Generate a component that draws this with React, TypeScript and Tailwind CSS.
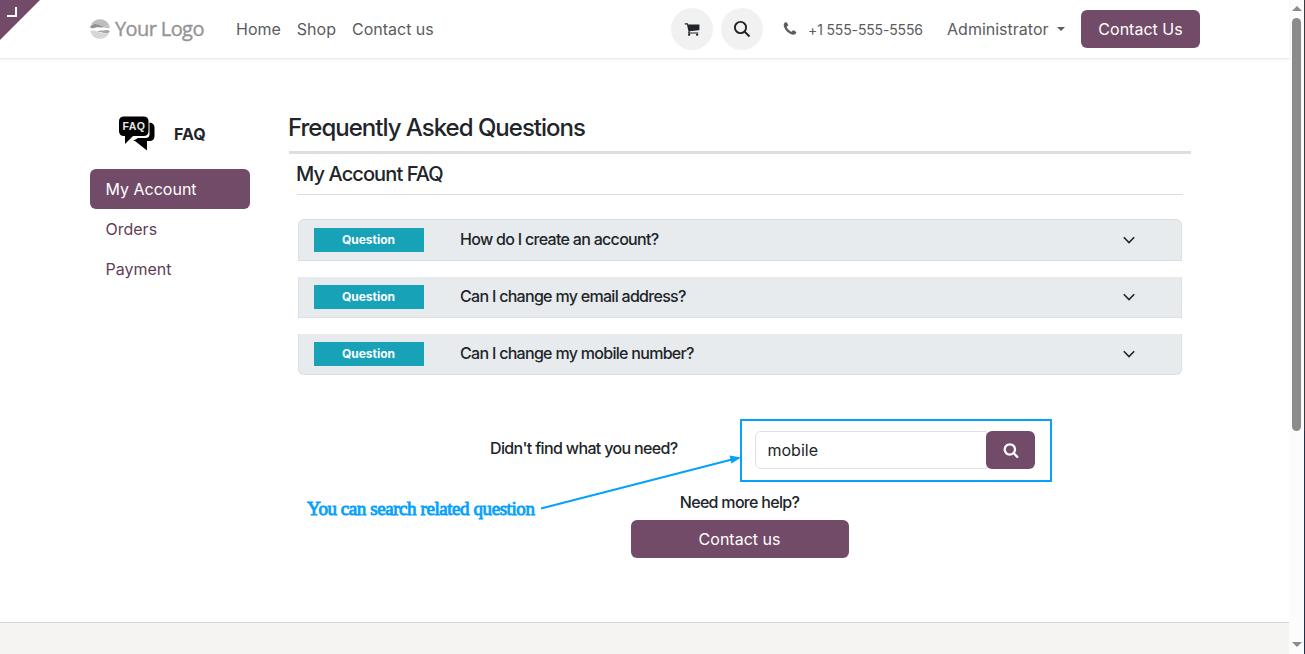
import { useState } from 'react';
import clsx from 'clsx';

const menu = ['Home', 'Shop', 'Contact us'];
const topics = ['My Account', 'Orders', 'Payment'];
const questions = [
  'How do I create an account?',
  'Can I change my email address?',
  'Can I change my mobile number?',
];

const icons = {
  cart: 'M704 1536q0 52-38 90t-90 38-90-38-38-90 38-90 90-38 90 38 38 90zm896 0q0 52-38 90t-90 38-90-38-38-90 38-90 90-38 90 38 38 90zm128-1088v512q0 24-16.5 42.5t-40.5 21.5l-1044 122q13 60 13 70 0 16-24 64h920q26 0 45 19t19 45-19 45-45 19h-1024q-26 0-45-19t-19-45q0-11 8-31.5t16-36 21.5-40 15.5-29.5l-177-823h-204q-26 0-45-19t-19-45 19-45 45-19h256q16 0 28.5 6.5t19.5 15.5 13 24.5 8 26 5.5 29.5 4.5 26h1201q26 0 45 19t19 45z',
  search: 'M1216 832q0-185-131.5-316.5t-316.5-131.5-316.5 131.5-131.5 316.5 131.5 316.5 316.5 131.5 316.5-131.5 131.5-316.5zm512 832q0 52-38 90t-90 38q-54 0-90-38l-343-342q-179 124-399 124-143 0-273.5-55.5t-225-150-150-225-55.5-273.5 55.5-273.5 150-225 225-150 273.5-55.5 273.5 55.5 225 150 150 225 55.5 273.5q0 220-124 399l343 343q37 37 37 90z',
  phone: 'M1600 1240q0 27-10 70.5t-21 68.5q-21 50-122 106-94 51-186 51-27 0-53-3.5t-57.5-12.5-47-14.5-55.5-20.5-49-18q-98-35-175-83-127-79-264-216t-216-264q-48-77-83-175-3-9-18-49t-20.5-55.5-14.5-47-12.5-57.5-3.5-53q0-92 51-186 56-101 106-122 25-11 68.5-21t70.5-10q14 0 21 3 18 6 53 76 11 19 30 54t35 63.5 31 53.5q3 4 17.5 25t21.5 35.5 7 28.5q0 20-28.5 50t-62 55-62 53-28.5 46q0 9 5 22.5t8.5 20.5 14 24 11.5 19q76 137 174 235t235 174q2 1 19 11.5t24 14 20.5 8.5 22.5 5q18 0 46-28.5t53-62 55-62 50-28.5q14 0 28.5 7t35.5 21.5 25 17.5q25 15 53.5 31t63.5 35 54 30q70 35 76 53 3 7 3 21z',
};

function Icon({ name, className }: { name: keyof typeof icons; className?: string }) {
  return (
    <svg viewBox="0 0 1792 1792" fill="currentColor" className={className}>
      <path d={icons[name]} />
    </svg>
  );
}

function Logo() {
  return (
    <a href="#" className="flex w-[146px] shrink-0 items-center">
      <svg width="20" height="20" viewBox="0 0 20 20">
        <path d="M.9 6A10 10 0 0 1 19.1 6C15 8 12 8 9 6.2 6 4.6 3 4.8.9 6Z" fill="#bdbdbd" />
        <path d="M0 8C2 4.2 6 4.4 9 6c2 1.2 4 1.6 6 1.2C12 9.4 8 7.6 5 8.8 3 9.6 1 9.2 0 8Z" fill="#8f8f8f" />
        <path d="M15 7.2 19.2 5.8 20 9C17 9.4 14 9 12 8Z" fill="#c4c4c4" />
        <path d="M20 12.5C18 14.6 15 14.8 12 13.6 10 12.8 8 12.6 6 13 9 10.8 12 12 15 11.2 17 10.6 19 11 20 12.5Z" fill="#a8a8a8" />
        <path d="M.2 12C3 11 6 11.6 8 12.8c4 2.2 8 2.3 11.4.4A10 10 0 0 1 .2 12Z" fill="#d6d6d6" />
      </svg>
      <span className="mb-px ml-[5px] whitespace-nowrap font-['Open_Sans'] text-[20px] leading-6 tracking-[-0.6px] text-[#959595] [-webkit-text-stroke:0.4px_#959595]">Your Logo</span>
    </a>
  );
}

function Header() {
  return (
    <header className="flex h-[59px] w-full items-center border-b border-[#ececec] pr-[89px] pl-[90px] text-[#5a5c5e] shadow-[0_1px_2px_rgba(0,0,0,0.06)]">
      <Logo />
      <nav className="flex gap-4">
        {menu.map((item) => (
          <a key={item} href="#" className="whitespace-nowrap">{item}</a>
        ))}
      </nav>
      <div className="ml-auto flex items-center">
        <button className="flex size-[42px] items-center justify-center rounded-full bg-[#f1f1f1] text-[#212529]">
          <Icon name="cart" className="size-4" />
        </button>
        <button className="ml-2 flex size-[42px] items-center justify-center rounded-full bg-[#f1f1f1] text-[#212529]">
          <svg width="18" height="18" viewBox="0 0 18 18" fill="none" stroke="currentColor" strokeWidth="1.9">
            <circle cx="7.5" cy="7.5" r="5.6" />
            <path d="m11.5 11.5 5 5" />
          </svg>
        </button>
        <Icon name="phone" className="ml-[18.5px] size-4" />
        <span className="ml-[10.5px] w-[115px] whitespace-nowrap text-[14px] tracking-[-0.15px]">+1 555-555-5556</span>
        <button className="ml-6 flex items-center gap-2">
          Administrator
          <span className="border-x-4 border-t-4 border-x-transparent border-t-current" />
        </button>
        <button className="ml-[16.5px] h-[38px] w-[119px] rounded-md bg-[#714b67] text-white">Contact Us</button>
      </div>
    </header>
  );
}

function Sidebar() {
  const [active, setActive] = useState('My Account');

  return (
    <aside className="w-40 shrink-0">
      <div className="flex h-[110px] items-end pl-7">
        <svg width="37" height="36" viewBox="0 0 37 36" className="mb-[17px]">
          <path d="M31.500 6.500c3 .5 5 2 5 5v8.500c0 3-2 5-5 5h-2.500v9.500L17 25h-2l5-3h7.500c3 0 4-1.500 4-4Z" fill="#000" />
          <path d="M6 .5h19.500q5 0 5 5v9.500q0 5-5 5H15L7 28V20H6q-5 0-5-5V5.500Q1 .5 6 .5Z" fill="#000" />
          <text x="4.500" y="14" fill="#e8e8e8" fontFamily="Liberation Sans" fontWeight="700" fontSize="10.500" textLength="22.500">FAQ</text>
        </svg>
        <span className="mb-[23px] ml-[19px] font-bold leading-6 text-[#212529]">FAQ</span>
      </div>
      {topics.map((topic) => (
        <button
          key={topic}
          onClick={() => setActive(topic)}
          className={clsx('flex h-10 w-full items-center rounded-md px-[15.5px]', topic === active ? 'bg-[#714b67] text-white' : 'text-[#5f4057]')}
        >
          {topic}
        </button>
      ))}
    </aside>
  );
}

function Questions() {
  return (
    <div className="mx-[9px] mt-6 flex flex-col gap-4">
      {questions.map((question, i) => (
        <div
          key={question}
          className={clsx(
            'flex items-center border border-[#dcdedf] bg-[#e7ebee] px-[15px]',
            i === 0 ? 'h-[42px] rounded-t-md' : 'h-[41px] border-t-0',
            i === questions.length - 1 && 'rounded-b-md',
          )}
        >
          <span className="flex h-6 w-[110px] items-center justify-center bg-[#17a2b8] pr-px text-xs font-bold text-white">Question</span>
          <span className="mb-[2px] ml-9 font-medium tracking-[-0.7px]">{question}</span>
          <svg width="12" height="8" viewBox="0 0 12 8" fill="none" stroke="#212529" strokeWidth="1.6" className="mr-[31.5px] ml-auto">
            <path d="m.8 1.3 5.200 5.200L11.200 1.300" />
          </svg>
        </div>
      ))}
    </div>
  );
}

function SearchHelp() {
  const [query, setQuery] = useState('mobile');

  return (
    <div className="mt-11 flex flex-col items-center">
      <div className="flex w-full items-start pl-[201px]">
        <span className="mt-[17px] w-[250px] whitespace-nowrap font-medium leading-6 tracking-[-0.65px]">Didn't find what you need?</span>
        <div className="relative flex h-[63px] w-[312px] border-2 border-[#05a1fb] pt-[10px] pl-[13px]">
          <input
            value={query}
            onChange={(e) => setQuery(e.target.value)}
            className="h-[38px] w-[232px] rounded-l-md border border-[#dee2e6] px-[11.5px] outline-none"
          />
          <button className="-ml-px flex h-[38px] w-[49px] items-center justify-center rounded-md bg-[#714b67] text-white">
            <Icon name="search" className="size-4" />
          </button>
          {/* callout pointing at the search box */}
          <svg width="204" height="56" viewBox="0 0 204 56" className="absolute top-[34px] -left-[202px]">
            <path d="M1 53.5 192 4.5" stroke="#05a1fb" strokeWidth="2" />
            <path d="M189.5 .5 201 2.5 191.5 8.5Z" fill="#05a1fb" />
          </svg>
          <span className="absolute top-[76px] -left-[435px] whitespace-nowrap font-['Liberation_Serif'] text-[19px] leading-6 tracking-[-0.43px] text-[#05a1fb] [-webkit-text-stroke:0.9px_#05a1fb]">
            You can search related question
          </span>
        </div>
      </div>
      <span className="mt-2 pr-px font-medium leading-6 tracking-[-0.7px]">Need more help?</span>
      <button className="mt-[6px] h-[38px] w-[218px] rounded-md bg-[#714b67] pr-px text-white">Contact us</button>
    </div>
  );
}

function Scrollbar() {
  return (
    <div className="flex h-full w-4 shrink-0 bg-[#fcfcfc]">
      <div className="flex w-[15px] flex-col items-center">
        <span className="mt-[6px] border-x-[5px] border-b-[5px] border-x-transparent border-b-[#8b8b8b]" />
        <span className="mt-[7px] h-[413px] w-[9px] rounded-full bg-[#8b8b8b]" />
        <span className="mt-auto mb-[7px] border-x-[5px] border-t-[5px] border-x-transparent border-t-[#8b8b8b]" />
      </div>
      <div className="flex w-px flex-col">
        <span className="h-[431px] bg-[#393b40]" />
        <span className="flex-1 bg-[#252b52]" />
      </div>
    </div>
  );
}

export default function App() {
  return (
    <div className="flex h-[654px] w-[1305px] overflow-hidden bg-white font-['Inter',sans-serif] text-base text-[#212529]">
      <div className="relative flex min-w-0 flex-1 flex-col">
        <Header />
        <svg width="40" height="40" viewBox="0 0 40 40" className="absolute top-0 left-0">
          <path d="M0 0h40L0 40Z" fill="#714b67" />
          <path d="M7 16h9V7" fill="none" stroke="#fff" strokeWidth="2" />
        </svg>
        <main className="flex flex-1 pr-[98px] pl-[90px]">
          <Sidebar />
          <section className="ml-[39px] flex-1">
            <h1 className="mt-[54px] border-b-[3px] border-[#dedede] pb-2 text-2xl font-medium leading-[30px] tracking-[-1px]">
              <span className="-ml-px">Frequently Asked Questions</span>
            </h1>
            <h2 className="mx-2 h-[41px] border-b border-[#dedede] pt-2 text-xl font-medium leading-6 tracking-[-0.9px]">
              <span className="-ml-px">My Account FAQ</span>
            </h2>
            <Questions />
            <SearchHelp />
          </section>
        </main>
        <footer className="h-8 border-t border-[#d3d3d3] bg-[#f5f4f2]" />
      </div>
      <Scrollbar />
    </div>
  );
}
